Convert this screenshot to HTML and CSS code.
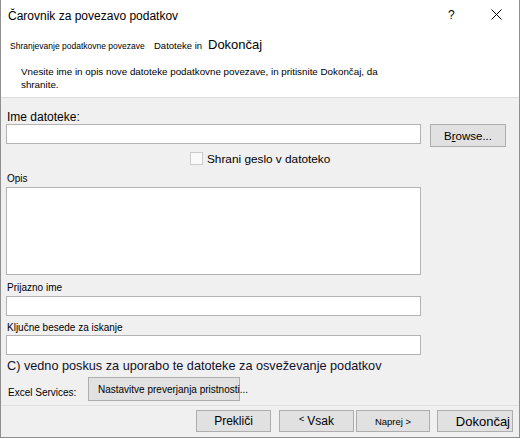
FILE: index.html
```html
<!DOCTYPE html>
<html lang="sl">
  <head>
    <meta charset="UTF-8" />
    <meta name="viewport" content="width=device-width, initial-scale=1.0" />
    <title>Čarovnik za povezavo podatkov</title>
    <link rel="stylesheet" href="styles.css">
  </head>
  <body>
    <div class="dialog">
      <header class="dialog-head">
        <div class="titlebar">
          <h1 class="title">Čarovnik za povezavo podatkov</h1>
          <span class="help">?</span>
          <svg class="close" width="11" height="11" viewBox="0 0 11 11">
            <path d="M0.5 0.5 L10.5 10.5 M10.5 0.5 L0.5 10.5" stroke="#000" stroke-width="1" fill="none" />
          </svg>
        </div>
        <div class="steps">
          <span class="step step-done">Shranjevanje podatkovne povezave</span>
          <span class="step step-mid">Datoteke in</span>
          <span class="step step-current">Dokončaj</span>
        </div>
        <p class="intro">
          Vnesite ime in opis nove datoteke podatkovne povezave, in pritisnite Dokončaj, da<br>
          shranite.
        </p>
      </header>

      <main class="dialog-body">
        <label class="label label-lg" for="file-name">Ime datoteke:</label>
        <div class="file-row">
          <input class="field" id="file-name" type="text" />
          <button class="btn btn-browse" type="button">B<u>r</u>owse...</button>
        </div>

        <label class="check">
          <span class="check-box"></span>
          <span class="check-text">Shrani geslo v datoteko</span>
        </label>

        <label class="label label-gap" for="description">Opis</label>
        <textarea class="field area" id="description"></textarea>

        <label class="label label-gap" for="friendly-name">Prijazno ime</label>
        <input class="field" id="friendly-name" type="text" />

        <label class="label label-gap label-tight" for="keywords">Ključne besede za iskanje</label>
        <input class="field field-tight" id="keywords" type="text" />

        <p class="always">C) vedno poskus za uporabo te datoteke za osveževanje podatkov</p>

        <div class="services-row">
          <span class="services-label">Excel Services:</span>
          <button class="btn btn-auth" type="button">Nastavitve preverjanja pristnosti...</button>
        </div>
      </main>

      <footer class="dialog-foot">
        <button class="btn btn-cancel" type="button">Prekliči</button>
        <button class="btn btn-back" type="button"><span class="arrow">&lt;</span> Vsak</button>
        <button class="btn btn-next" type="button">Naprej &gt;</button>
        <button class="btn btn-finish" type="button">Dokončaj</button>
      </footer>
    </div>
  </body>
</html>
```

FILE: styles.css
```css
* {
  box-sizing: border-box;
  margin: 0;
  padding: 0;
}

body {
  background: #fff;
  color: #000;
  font-family: 'Liberation Sans', Arial, sans-serif;
  width: 520px;
  height: 439px;
  overflow: hidden;
}

.dialog {
  display: flex;
  flex-direction: column;
  width: 520px;
  height: 438px;
  border: 1px solid #8f8f8f;
  border-top: none;
  background: #f0f0f0;
}

/* white header with title, steps and intro */

.dialog-head {
  background: #fff;
  height: 98px;
  border-bottom: 1px solid #dadada;
  padding-top: 8px;
}

.titlebar {
  display: flex;
  align-items: flex-start;
  height: 16px;
  padding-left: 7px;
}

.title {
  font-size: 12px;
  font-weight: normal;
  line-height: 16px;
  flex: 1;
}

.help {
  font-size: 12px;
  line-height: 12px;
  margin-top: 1px;
  width: 43px;
}

.close {
  display: block;
  margin-top: 1px;
  margin-right: 17px;
}

.steps {
  display: flex;
  align-items: baseline;
  height: 14px;
  line-height: 14px;
  margin-top: 14px;
  padding-left: 9px;
  white-space: nowrap;
}

.step-done {
  font-size: 8.5px;
  width: 144px;
}

.step-mid {
  font-size: 9.5px;
  width: 52px;
  margin-right: 2px;
}

.step-current {
  font-size: 13px;
}

.intro {
  font-size: 9.8px;
  line-height: 13px;
  margin-top: 13px;
  padding-left: 20px;
}

/* grey form area */

.dialog-body {
  display: flex;
  flex-direction: column;
  align-items: flex-start;
  padding: 13px 0 0 5px;
}

.label {
  display: block;
  font-size: 10px;
  line-height: 12px;
  padding-left: 1px;
}

.label-lg {
  font-size: 12px;
  line-height: 13px;
}

.label-gap {
  margin-top: 7px;
  margin-bottom: 2px;
}

.label-tight {
  margin-top: 6px;
  margin-bottom: 1px;
}

.field {
  display: block;
  width: 415px;
  height: 20px;
  background: #fff;
  border: 1px solid #b3b3b3;
  border-radius: 0;
  font-family: inherit;
  font-size: 11px;
  outline: none;
}

.area {
  height: 88px;
  resize: none;
}

.file-row {
  display: flex;
  align-items: flex-start;
  gap: 9px;
}

.btn {
  display: inline-flex;
  align-items: center;
  justify-content: center;
  background: #e1e1e1;
  border: 1px solid #adadad;
  color: #000;
  font-family: inherit;
  white-space: nowrap;
  cursor: pointer;
}

.btn-browse {
  width: 76px;
  height: 23px;
  font-size: 11.5px;
}

.check {
  display: flex;
  align-items: flex-start;
  margin-top: 5px;
  margin-left: 184px;
  height: 14px;
}

.check-box {
  width: 13px;
  height: 13px;
  border: 1px solid #cccccc;
  background: #f9f9f9;
  margin-right: 4px;
}

.check-text {
  font-size: 11.8px;
  line-height: 14px;
}

.always {
  font-size: 12.7px;
  line-height: 15px;
  margin-top: 4px;
  padding-left: 1px;
  color: #10102a;
}

.services-row {
  display: flex;
  align-items: flex-start;
  margin-top: 3px;
  padding-left: 2px;
}

.services-label {
  font-size: 10px;
  line-height: 12px;
  margin-top: 10px;
  width: 80px;
}

.btn-auth {
  width: 152px;
  height: 24px;
  font-size: 10px;
  justify-content: flex-start;
  padding-left: 9px;
  overflow: visible;
}

/* bottom button bar */

.dialog-foot {
  display: flex;
  align-items: flex-start;
  margin-top: 4px;
  border-top: 1px solid #dfdfdf;
  padding: 4px 0 0 195px;
}

.dialog-foot .btn {
  height: 22px;
  font-size: 12px;
}

.btn-cancel {
  width: 75px;
  font-size: 11.5px;
}

.btn-back {
  width: 75px;
  margin-left: 8px;
}

.btn-back .arrow {
  font-size: 9px;
  align-self: flex-start;
  margin-top: 3px;
  margin-right: 3px;
}

.dialog-foot .btn-next {
  width: 74px;
  margin-left: 2px;
  font-size: 9.5px;
}

.dialog-foot .btn-finish {
  width: 76px;
  margin-left: 7px;
  font-size: 13px;
  justify-content: flex-end;
  padding-right: 2px;
}
```
